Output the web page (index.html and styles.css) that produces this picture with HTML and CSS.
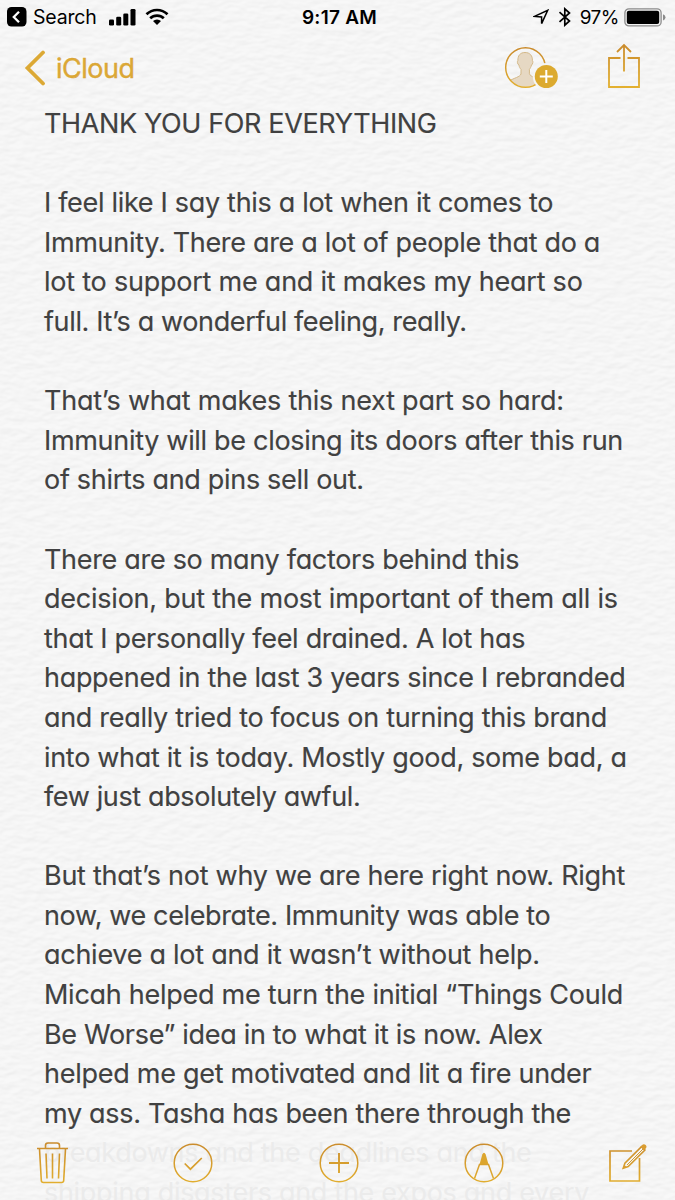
FILE: index.html
```html
<!DOCTYPE html>
<html lang="en">
<head>
<meta charset="utf-8">
<title>Notes</title>
<link rel="stylesheet" href="styles.css">
</head>
<body>
<div class="screen">
  <svg class="paper" width="675" height="1200" aria-hidden="true">
    <filter id="grain" x="0" y="0" width="100%" height="100%" color-interpolation-filters="sRGB">
      <feTurbulence type="fractalNoise" baseFrequency="0.08 0.15" numOctaves="2" seed="8" result="n"/>
      <feDiffuseLighting in="n" surfaceScale="0.55" diffuseConstant="1.09" lighting-color="#ffffff" result="lit">
        <feDistantLight azimuth="250" elevation="62"/>
      </feDiffuseLighting>
      <feColorMatrix in="lit" type="matrix" values=".27 0 0 0 .701  0 .27 0 0 .701  0 0 .27 0 .701  0 0 0 1 0"/>
    </filter>
    <rect width="675" height="1200" filter="url(#grain)"/>
  </svg>
  <svg width="0" height="0" class="defs" aria-hidden="true">
    <defs>
      <linearGradient id="gold" gradientUnits="userSpaceOnUse" x1="0" y1="0" x2="0" y2="44">
        <stop offset="0" stop-color="#c98a2d"/><stop offset="1" stop-color="#e3b02f"/>
      </linearGradient>
    </defs>
  </svg>

  <header class="status">
    <div class="status-left">
      <svg width="20" height="20" viewBox="0 0 20 20"><rect width="19.5" height="19.5" rx="4.5" fill="#000"/><path d="M12 4.800 6.800 10l5.200 5.200" fill="none" stroke="#fff" stroke-width="2.300"/></svg>
      <span class="back-app">Search</span>
      <svg class="signal" width="27" height="17" viewBox="0 0 27 17"><rect x="0" y="10.500" width="5" height="6" rx="1.300"/><rect x="7.200" y="7.800" width="5" height="8.700" rx="1.300"/><rect x="14.300" y="4.500" width="5" height="12" rx="1.300"/><rect x="21.500" y="0" width="5" height="16.500" rx="1.300"/></svg>
      <svg class="wifi" width="24" height="18" viewBox="0 0 24 18"><path d="M1.500 6.300a15 15 0 0 1 21 0M5.200 10.300a9.800 9.800 0 0 1 13.600 0" fill="none" stroke="#000" stroke-width="2.700"/><path d="M8 13a5.800 5.800 0 0 1 8 0l-4 4z"/></svg>
    </div>
    <div class="clock">9:17 AM</div>
    <div class="status-right">
      <svg class="loc" width="17" height="17" viewBox="0 0 17 17"><path d="M1.500 7.400 14.700 1.300 8.600 14.600V8z" fill="none" stroke="#000" stroke-width="1.500"/></svg>
      <svg class="bt" width="14" height="20" viewBox="0 0 14 20"><path d="M1.500 5.200 11.500 14 6.800 18.200V1.800L11.500 6 1.500 14.800" fill="none" stroke="#000" stroke-width="1.700"/></svg>
      <span class="pct">97%</span>
      <svg class="batt" width="43" height="19" viewBox="0 0 43 19"><rect x=".9" y=".9" width="36.200" height="17" rx="4" fill="none" stroke="#8b8b8b" stroke-width="1.300"/><rect x="2.800" y="2.800" width="32.400" height="13.200" rx="2"/><path d="M39 6.300q2.500 1 2.500 3.100T39 12.500z" fill="#8b8b8b"/></svg>
    </div>
  </header>

  <nav class="navbar">
    <div class="back">
      <svg width="22" height="36" viewBox="0 0 22 36"><path d="M19 2.500 3.500 18 19 33.500" fill="none" stroke="#dca935" stroke-width="3.800" stroke-linecap="round"/></svg>
      <span class="back-label">iCloud</span>
    </div>
    <div class="nav-actions">
      <svg class="person" width="56" height="44" viewBox="0 0 56 44"><clipPath id="disc"><circle cx="21.500" cy="21.500" r="19.300"/></clipPath><g clip-path="url(#disc)"><path d="M21 6.500c5 0 7.600 3.300 7.400 8 .9.700.6 3.600-.9 4.500-.5 2-1.200 3.300-2.100 4.300v4.500c1 3 7 4 11.500 7V44H5v-9c5-3 11-4 12-7v-4.700c-1-1-1.700-2.300-2.100-4.300-1.600-.9-1.900-3.800-1-4.500-.2-4.700 2.200-8 7.100-8z" fill="#e6d8c3" stroke="#d3b888" stroke-width="1"/></g><circle cx="21.500" cy="21.500" r="19.800" fill="none" stroke="url(#gold)" stroke-width="1.500"/><circle cx="42.300" cy="30.500" r="13.500" fill="#f5f5f5"/><circle cx="42.300" cy="30.500" r="11.500" fill="#dcaa2f"/><path d="M42.300 24v13M35.800 30.500h13" stroke="#fff" stroke-width="2"/></svg>
      <svg class="share" width="34" height="46" viewBox="0 0 34 46"><path d="M13.500 15H2v29h30V15H20.500M17 28.500V2M10 9l7-7 7 7" fill="none" stroke="url(#gold)" stroke-width="1.800"/></svg>
    </div>
  </nav>

  <main class="note">
    <p><span class="line snug">THANK YOU FOR EVERYTHING</span></p>
    <p><span class="line">I feel like I say this a lot when it comes to</span>
    <span class="line">Immunity. There are a lot of people that do a</span>
    <span class="line loose">lot to support me and it makes my heart so</span>
    <span class="line snug">full. It’s a wonderful feeling, really.</span></p>
    <p><span class="line loose">That’s what makes this next part so hard:</span>
    <span class="line">Immunity will be closing its doors after this run</span>
    <span class="line">of shirts and pins sell out.</span></p>
    <p><span class="line">There are so many factors behind this</span>
    <span class="line loose">decision, but the most important of them all is</span>
    <span class="line">that I personally feel drained. A lot has</span>
    <span class="line">happened in the last 3 years since I rebranded</span>
    <span class="line">and really tried to focus on turning this brand</span>
    <span class="line">into what it is today. Mostly good, some bad, a</span>
    <span class="line snug">few just absolutely awful.</span></p>
    <p><span class="line even">But that’s not why we are here right now. Right</span>
    <span class="line snug">now, we celebrate. Immunity was able to</span>
    <span class="line even">achieve a lot and it wasn’t without help.</span>
    <span class="line even">Micah helped me turn the initial “Things Could</span>
    <span class="line">Be Worse” idea in to what it is now. Alex</span>
    <span class="line even">helped me get motivated and lit a fire under</span>
    <span class="line">my ass. Tasha has been there through the</span>
    <span class="line faded">breakdowns and the deadlines and the</span>
    <span class="line faded">shipping disasters and the expos and every</span></p>
  </main>

  <footer class="toolbar">
    <svg width="34" height="44" viewBox="0 0 34 44"><path d="M2 7.500h31M10.500 7V4.500q0-2.500 2.500-2.500h9q2.500 0 2.500 2.500V7M4.500 8l1.800 31.500q.1 2 2.200 2h18q2.100 0 2.200-2L30.500 8M11 12.500l1 25M17.500 12.500v25M24.500 12.500l-1 25" fill="none" stroke="url(#gold)" stroke-width="1.600"/></svg>
    <svg width="42" height="44" viewBox="0 0 42 44"><g fill="none" stroke="url(#gold)" stroke-width="1.500"><circle cx="21" cy="22" r="18.800"/><path d="m12.700 22.500 5.700 5.700L29.800 17" stroke-width="1.700"/></g></svg>
    <svg width="42" height="44" viewBox="0 0 42 44"><g fill="none" stroke="url(#gold)" stroke-width="1.500"><circle cx="21" cy="22" r="18.800"/><path d="M21 12v20M11 22h20" stroke-width="1.900"/></g></svg>
    <svg width="42" height="44" viewBox="0 0 42 44"><g fill="none" stroke="url(#gold)" stroke-width="1.500"><circle cx="21" cy="22" r="18.800"/><path d="M11.500 37.500 16.500 23.500h9l5 14"/></g><path d="m16.500 23.500 2.800-10q1.700-3.500 3.400 0l2.800 10z" fill="#dca52d"/></svg>
    <svg width="40" height="44" viewBox="0 0 40 44"><g fill="none" stroke="url(#gold)" stroke-width="1.700"><path d="M24 10H2v30h29.500V17"/><path d="m15.200 27.200 1.700-5L33.500 5.600l3.400 3.400L20.200 25.600z" stroke-width="1.600"/><path d="M19 24 35 8" stroke-width="1"/></g><path d="m32.500 5.800 2.300-2.300q1.500-.8 2.900.5t.5 2.900l-2.300 2.300zM14.500 28l2-4 2 2z" fill="#d99c31"/></svg>
  </footer>
</div>
</body>
</html>
```
FILE: styles.css
```css
* { box-sizing: border-box; }
body { margin: 0; background: #f5f5f5; font-family: Inter, "Liberation Sans", sans-serif; }
.screen { position: relative; width: 675px; height: 1200px; overflow: hidden; display: flex; flex-direction: column; }
.paper { position: absolute; inset: 0; z-index: -1; }
.defs { position: absolute; }
svg { display: block; flex: none; }
.status { display: grid; grid-template-columns: 1fr auto 1fr; align-items: center; height: 34px; padding: 0 8px 0 7px; color: #000; }
.status-left, .status-right { display: flex; align-items: center; }
.status-right { justify-content: flex-end; }
.back-app { margin-left: 6px; font-size: 19.500px; letter-spacing: -.2px; }
.signal { margin-left: 12px; }
.wifi { margin-left: 9px; }
.clock { padding-left: 5px; font-size: 19px; font-weight: 600; letter-spacing: .25px; }
.bt { margin-left: 8px; }
.pct { margin: 0 5px 0 8px; font-size: 19px; letter-spacing: -.5px; }
.navbar { display: flex; justify-content: space-between; height: 70px; padding: 9px 34px 0 24px; }
.back { display: flex; align-items: center; height: 50px; gap: 10px; }
.back-label { font-size: 27px; letter-spacing: -.5px; color: #dca935; -webkit-text-stroke: .4px #d9a238; }
.nav-actions { display: flex; gap: 47px; }
.person { margin-top: 3px; }
.note { flex: 1; padding: 0 0 0 44px; color: #414141; font-size: 27px; line-height: 39.6px; letter-spacing: -.31px; font-feature-settings: "cv11"; -webkit-text-stroke: .15px #414141; min-height: 0; }
.note p { margin: 0 0 39.6px; }
.line { display: block; white-space: nowrap; }
.snug { letter-spacing: -.37px; }
.even { letter-spacing: -.27px; }
.loose { letter-spacing: -.23px; }
.faded { color: #ebebeb; -webkit-text-stroke: 0; }
.toolbar { position: absolute; left: 0; right: 0; bottom: 15px; display: flex; justify-content: space-between; padding: 0 27px 0 35px; }
```
